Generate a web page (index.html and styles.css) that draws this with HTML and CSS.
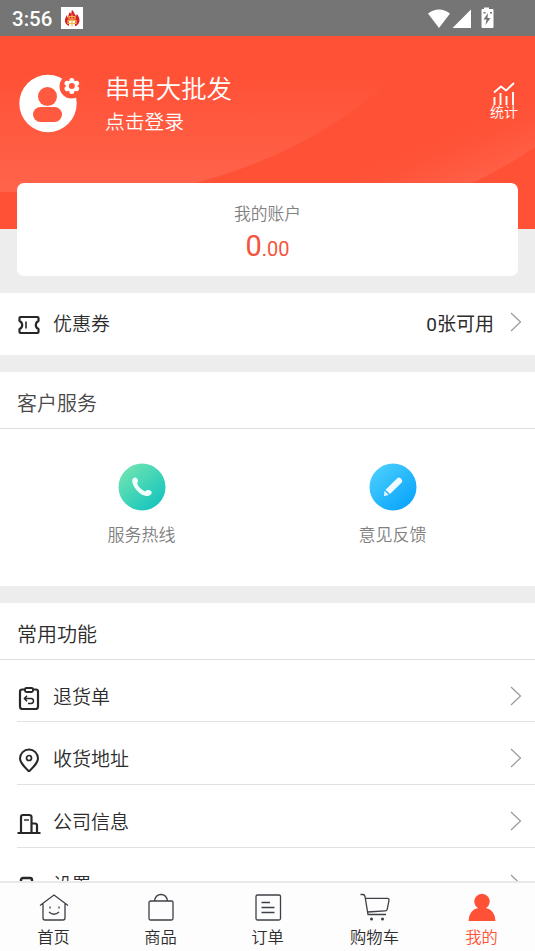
FILE: index.html
```html
<!DOCTYPE html>
<html lang="zh-CN">
<head>
<meta charset="utf-8">
<title>我的</title>
<link rel="stylesheet" href="styles.css">
</head>
<body>
<div class="app">
  <header class="status">
    <span class="time">3:56</span>
    <svg class="notice" viewBox="0 0 22 22"><path fill="#fff" d="M0 0h22v22H0z"/><path fill="#d5202b" d="M8 19C3 17 3 12 6 8l.5 3C8 9 7 7 9 5l1 2c1-1 0-3 1-4 2 1 2 4 4 6l1-2c3 4 4 9-1 12z"/><path fill="#fff" d="M8 14h6v5H8z"/><path d="M8 9.500h6v2.500H8zM7 13.500h8v3H7zM11 7.500v12" fill="none" stroke="#f3b74b" stroke-width="1.200"/></svg>
    <svg class="signals" viewBox="0 0 68 22"><g fill="#fff"><path d="M0 5.500Q11-2.500 22 5.500L11 20z"/><path d="M43 1.500V20H24.500z"/><path d="M56-.5h5V1h3.500q1 0 1 1v17q0 1-1 1h-10q-1 0-1-1V2q0-1 1-1H56z"/></g><path fill="#757575" d="M60 5l-4.500 6.500h3L57.500 17l5-7h-3zM55.500 4h2v1.500h-2zM62 4h2v1.500h-2z"/></svg>
  </header>

  <section class="hero">
    <svg class="waves" viewBox="0 0 535 193" preserveAspectRatio="none">
      <defs>
        <linearGradient id="w1" x1="0" y1="0" x2="0" y2="1"><stop offset=".25" stop-color="#ff634a" stop-opacity="0"/><stop offset=".95" stop-color="#ff634a"/></linearGradient>
        <linearGradient id="w2" gradientUnits="userSpaceOnUse" x1="420" y1="107" x2="445" y2="168"><stop offset="0" stop-color="#ff634a" stop-opacity="0"/><stop offset=".3" stop-color="#ff634a" stop-opacity=".15"/><stop offset="1" stop-color="#ff634a"/></linearGradient>
      </defs>
      <path fill="url(#w1)" d="M0 0h430Q350 105 195 147Q180 152 165 156H0z"/>
      <path fill="url(#w2)" d="M300 156L535 60V111Q505 132 468 149L450 156z"/>
    </svg>
    <div class="profile">
      <svg class="avatar" viewBox="0 0 64 60"><circle cx="29" cy="30.500" r="28.700" fill="#fff"/><circle cx="52.500" cy="13.500" r="12" fill="#ff5439"/><g fill="#ff593f"><circle cx="28.500" cy="23.500" r="9.500"/><rect x="14" y="34" width="29" height="15" rx="7.500"/></g><g stroke="#fff" stroke-width="5" stroke-linecap="round"><path d="M52.800 7.500v11M48 10.300l9.600 5.400M57.600 10.300L48 15.700"/></g><circle cx="52.800" cy="13" r="5.500" fill="#fff"/><circle cx="52.800" cy="13" r="3" fill="#ff5439"/></svg>
      <div class="names"><div class="shop">串串大批发</div><div class="login">点击登录</div></div>
      <div class="stats"><svg viewBox="0 0 24 26"><path d="M2 10.500l7-6 5 4 8-7.500M2.500 15v8M8.500 11v12M14.500 14v9M21 10v13" fill="none" stroke="#fff" stroke-width="1.900"/></svg><span>统计</span></div>
    </div>
  </section>

  <section class="account"><div class="label">我的账户</div><div class="amount">0<small>.00</small></div></section>

  <section class="coupon">
    <svg class="ico" viewBox="0 0 24 24"><path d="M3.500 4h17q1 0 1 1v3q-2.700 1.200-2.700 4t2.700 4v3q0 1-1 1h-17q-1 0-1-1v-3q2.700-1.200 2.700-4T2.500 8V5q0-1 1-1z" stroke-width="2.200"/><path d="M9 8.500v7" stroke-width="1.600"/></svg>
    <span class="name">优惠券</span><span class="value">0张可用</span>
    <svg class="arrow" viewBox="0 0 12 20"><path d="M1 1l9.500 9L1 19"/></svg>
  </section>

  <section class="services">
    <h2 class="soft">客户服务</h2>
    <div class="grid">
      <div class="service"><svg viewBox="0 0 48 48"><defs><linearGradient id="green" x1=".15" y1=".1" x2=".85" y2=".9"><stop stop-color="#6de3b1"/><stop offset="1" stop-color="#16c5be"/></linearGradient></defs><circle cx="24" cy="24" r="23.500" fill="url(#green)"/><path fill="#f0fffc" d="M14.300 17q.5-3 3.200-2.500 2.200.5 2.500 3 .2 1.600-1 2.800c1.500 4 4.500 6.500 8 8.200 1.500-1.700 3-2 4.700-1.200 2.700 1.200 2.500 3.700.2 4.900-4 2.200-9-.2-12.900-4.600-3.100-3.500-5.100-7.400-4.700-10.600z"/></svg><span>服务热线</span></div>
      <div class="service"><svg viewBox="0 0 48 48"><defs><linearGradient id="blue" x1=".15" y1=".1" x2=".85" y2=".9"><stop stop-color="#48cdfd"/><stop offset="1" stop-color="#0aa5fb"/></linearGradient></defs><circle cx="24" cy="24" r="23.500" fill="url(#blue)"/><path fill="#effaff" d="M28.300 15.200q1.500-1.500 3.200 0l1.200 1.200q1.300 1.500 0 3L21 31l-4.500-4.300zM15.500 27.700l4.200 4.200-4.700 1.200z"/></svg><span>意见反馈</span></div>
    </div>
  </section>

  <section class="common">
    <h2>常用功能</h2>
    <div class="row"><svg class="ico" viewBox="0 0 24 24"><rect x="3" y="3.500" width="18" height="19.500" rx="2.200" stroke-width="2.200"/><rect x="8" y="2" width="8" height="4" rx="1.500" fill="#fff" stroke-width="1.900"/><path d="M7.500 12.500h6.500q2.500.2 2.500 2.500T14 17.500h-3M10 9.800l-2.700 2.700L10 15.200" stroke-width="1.500"/></svg><span class="name">退货单</span><svg class="arrow" viewBox="0 0 12 20"><path d="M1 1l9.500 9L1 19"/></svg></div>
    <div class="row"><svg class="ico" viewBox="0 0 24 24"><path d="M12 23.500C7 18.500 3 14.500 3 10.500a9 9 0 0 1 18 0c0 4-4 8-9 13z" stroke-width="2"/><circle cx="12" cy="10" r="2.500" stroke-width="1.700"/></svg><span class="name">收货地址</span><svg class="arrow" viewBox="0 0 12 20"><path d="M1 1l9.500 9L1 19"/></svg></div>
    <div class="row"><svg class="ico" viewBox="0 0 24 24"><path d="M.5 22h23M4 22V6q0-2 2-2h6q2.500 0 2.500 2v16M14.500 12.500h3.500q2 0 2 1.800V22" stroke-width="2.200"/><path d="M7 9h5" stroke-width="1.400"/></svg><span class="name">公司信息</span><svg class="arrow" viewBox="0 0 12 20"><path d="M1 1l9.500 9L1 19"/></svg></div>
    <div class="row"><svg class="ico" viewBox="0 0 24 24"><rect x="4" y="4" width="11" height="18" rx="2" stroke-width="2.400"/></svg><span class="name">设置</span><svg class="arrow" viewBox="0 0 12 20"><path d="M1 1l9.500 9L1 19"/></svg></div>
  </section>

  <nav class="tabs">
    <div class="tab"><svg viewBox="0 0 32 30"><path d="M2 12.500L16 2l14 10.500M5 10.500V25q0 2 2 2h18q2 0 2-2V10.500M11 19q5 4.500 10 0M12 13.500v2M21 13.500v2"/></svg><span>首页</span></div>
    <div class="tab"><svg viewBox="0 0 32 30"><rect x="4" y="8" width="24" height="19" rx="1.500"/><path d="M9.500 8q1-6.500 6.500-6.500T22.500 8"/></svg><span>商品</span></div>
    <div class="tab"><svg viewBox="0 0 32 30"><rect x="4" y="2" width="24.500" height="25" rx="1.500"/><path d="M9.500 9.500H18M9.500 14.500h13M9.500 19.500h13"/></svg><span>订单</span></div>
    <div class="tab"><svg viewBox="0 0 32 30"><path d="M1.500 1.500H4q1.500 0 2 2L9 21.500h18M6.300 5.300h22q2 0 1.700 2l-1.800 9q-.3 1.400-2 1.500L8.500 19"/><path d="M12.500 26h.01M23.500 26h.01" stroke-width="3" stroke-linecap="round"/></svg><span>购物车</span></div>
    <div class="tab active"><svg viewBox="0 0 32 30"><path class="person" d="M2.500 28q.5-11 9.500-13a7.700 7.700 0 1 1 8 0q9 2 9.500 13z"/></svg><span>我的</span></div>
  </nav>
</div>
</body>
</html>
```
FILE: styles.css
```css
* { box-sizing: border-box; }
body { margin: 0; font-family: Roboto, "Noto Sans CJK SC", sans-serif; font-weight: 350; color: #2c2c2c; }
svg { display: block; flex: none; }
.app { width: 535px; height: 951px; overflow: hidden; background: #ededed; display: flex; flex-direction: column; }
.app > * { flex: none; }

.status { height: 36px; background: #757575; display: flex; align-items: center; padding: 0 39px 0 12px; }
.time { color: #fff; font-size: 20.5px; font-weight: 500; width: 49px; line-height: 36px; padding-top: 2px; }
.notice { width: 22px; height: 22px; }
.signals { width: 68px; height: 22px; margin: 1px 0 0 auto; overflow: visible; }

.hero { height: 193px; background: #ff5136; position: relative; }
.waves { position: absolute; inset: 0; width: 535px; height: 193px; }
.profile { position: relative; display: flex; color: #fff; padding: 37px 17px 0 19px; }
.avatar { width: 64px; height: 60px; }
.names { margin-left: 22px; }
.shop { font-size: 25.4px; line-height: 32px; }
.login { font-size: 19.800px; line-height: 28px; margin-top: 4px; }
.stats { margin-left: auto; padding-top: 9px; display: flex; flex-direction: column; align-items: center; font-size: 14px; line-height: 14px; }
.stats svg { width: 24px; height: 26px; }
.stats span { margin-top: -3px; }

.account { position: relative; height: 93px; margin: -46px 17px 17px; background: #fff; border-radius: 7px; text-align: center; }
.label { font-size: 16.800px; line-height: 24px; padding-top: 19px; color: #808080; }
.amount { color: #f5533d; font-size: 29px; font-weight: 400; line-height: 34px; margin-top: 3px; }
.amount small { font-size: 20px; }

.coupon { height: 62px; margin-bottom: 17px; background: #fff; display: flex; align-items: center; padding: 0 13px 4px 17px; font-size: 19px; }
.ico { width: 24px; height: 24px; fill: none; stroke: #272727; stroke-linejoin: round; }
.coupon .ico { margin-top: 6px; }
.name { margin-left: 12px; font-size: 19px; }
.value { margin-left: auto; font-weight: 400; }
.arrow { width: 12px; height: 20px; fill: none; stroke: #999; stroke-width: 1.2; margin-left: 16px; }

h2 { margin: 0; height: 57px; padding: 5px 17px 0; border-bottom: 1px solid #ddd; font-size: 20px; font-weight: inherit; line-height: 54px; }
.soft { color: #484848; }
.services { height: 214px; background: #fff; margin-bottom: 17px; }
.grid { display: grid; grid-template-columns: 251px 251px; padding: 34px 16px 0; }
.service { display: flex; flex-direction: column; align-items: center; font-size: 17px; line-height: 24px; color: #808080; }
.service svg { width: 48px; height: 48px; margin-bottom: 12px; }

.common { background: #fff; height: 278px; overflow: hidden; }
.row { height: 63px; margin-left: 17px; padding: 9px 13px 0 0; border-bottom: 1px solid #e1e1e1; display: flex; align-items: center; }
.row:nth-child(2) { height: 62px; }
.row .ico { margin-top: 5px; }
.row .arrow { margin: 1px 0 0 auto; }

.tabs { height: 70px; background: #fdfdfd; border-top: 2px solid #e8e8e8; display: grid; grid-template-columns: repeat(5, 1fr); }
.tab { display: flex; flex-direction: column; align-items: center; padding-top: 10px; font-size: 16.300px; line-height: 24px; }
.tab svg { width: 32px; height: 30px; margin-bottom: 3px; fill: none; stroke: #3e4048; stroke-width: 1.3; }
.active { color: #ff5136; }
.tab .person { fill: #ff5136; stroke: none; }
```
